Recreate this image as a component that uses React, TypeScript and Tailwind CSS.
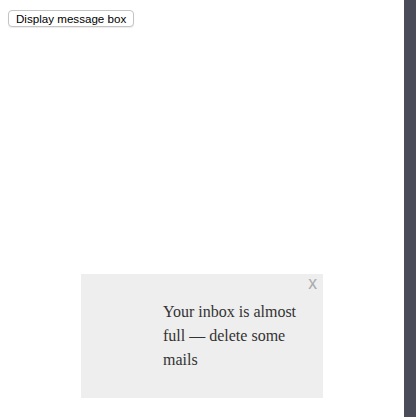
import React, { useState } from 'react';

const App: React.FC = () => {
  const [open, setOpen] = useState(true);

  return (
    <div className="flex h-[417px] w-full bg-white">
      <div className="relative flex-1 px-2 pt-[10px]">
        <button
          onClick={() => setOpen(true)}
          className="block h-[17px] rounded-[4px] border border-[#c4c4c4] bg-white px-[7px] text-[11.6px] leading-[15px] text-black shadow-[0_1px_1px_rgba(0,0,0,0.08)] font-['Liberation_Sans',Arial,sans-serif]"
        >
          Display message box
        </button>

        {open && (
          <div className="absolute left-[81px] top-[274px] flow-root w-[242px] bg-[#eee]">
            <p className="my-4 py-[10px] pl-[82px] pr-5 text-[16px] leading-[24px] text-[#333] font-['Liberation_Serif','Times_New_Roman',serif]">
              Your inbox is almost full — delete some mails
            </p>
            <button
              onClick={() => setOpen(false)}
              className="absolute right-0 top-[-2px] px-[6px] py-[1px] text-[17.6px] leading-[20px] text-[#aaa] font-['Liberation_Sans',Arial,sans-serif]"
            >
              x
            </button>
          </div>
        )}
      </div>
      <div className="h-full w-[12px] bg-[#4a4c5a]" />
    </div>
  );
};

export default App;
